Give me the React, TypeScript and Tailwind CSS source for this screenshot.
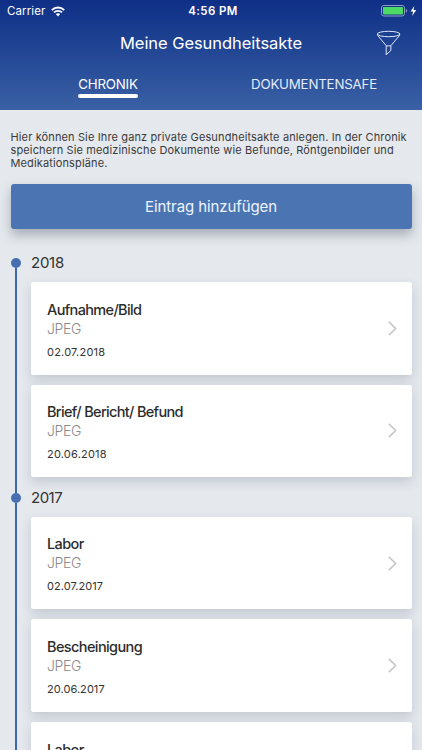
type Entry = { title: string; kind?: string; date?: string; dateClass?: string; titleClass: string };

const groups: { year: string; yearClass: string; entries: Entry[] }[] = [
  {
    year: "2018",
    yearClass: "tracking-[-0.25px]",
    entries: [
      { title: "Aufnahme/Bild", kind: "JPEG", date: "02.07.2018", titleClass: "tracking-[-0.65px]", dateClass: "tracking-[0.2px]" },
      { title: "Brief/ Bericht/ Befund", kind: "JPEG", date: "20.06.2018", titleClass: "tracking-[-0.67px]", dateClass: "tracking-[0.2px]" },
    ],
  },
  {
    year: "2017",
    yearClass: "tracking-[-0.5px]",
    entries: [
      { title: "Labor", kind: "JPEG", date: "02.07.2017", titleClass: "tracking-[-0.6px]", dateClass: "tracking-[0.05px]" },
      { title: "Bescheinigung", kind: "JPEG", date: "20.06.2017", titleClass: "tracking-[-0.6px]", dateClass: "tracking-[0.05px]" },
      { title: "Labor", titleClass: "tracking-[-0.6px]" },
    ],
  },
];

const StatusBar = () => {
  return (
    <div className="grid h-[22px] grid-cols-3 items-center pl-[7px] pr-[5px] text-[11.5px] leading-none">
      <div className="flex items-center gap-[5.5px]">
        <span className="pt-px tracking-[0.1px]">Carrier</span>
        <svg width="14" height="11" viewBox="0 0 14 11" fill="none" stroke="white" strokeWidth="1.9">
          <path d="M0.8 4.1C4.3 0.6 9.7 0.6 13.2 4.1" />
          <path d="M3 6.4C5.2 4.3 8.8 4.3 11 6.4" />
          <path d="M4.8 8.1C6 7 8 7 9.2 8.1L7 10.4Z" fill="white" stroke="none" />
        </svg>
      </div>
      <span className="pt-px pl-[2px] text-center font-semibold tracking-[0.4px]">4:56 PM</span>
      <div className="flex items-center justify-end">
        <svg width="36" height="12" viewBox="0 0 36 12">
          <rect x="0.5" y="0.5" width="23" height="10.5" rx="2.4" fill="none" stroke="#8a9cc8" />
          <rect x="2" y="2" width="20" height="7.5" rx="1" fill="#4cd964" />
          <path d="M24.8 4V7.6C25.7 7.3 26.2 6.6 26.2 5.8S25.7 4.3 24.8 4Z" fill="#8a9cc8" />
          <path d="M33.3 1L29.5 6.4H32.1L31.2 10.9L35.2 5.1H32.5Z" fill="white" />
        </svg>
      </div>
    </div>
  );
};

const FilterIcon = () => {
  return (
    <svg width="26" height="26" viewBox="0 0 26 26" fill="none" stroke="#dfe8fa" strokeWidth="1" strokeLinejoin="round">
      <ellipse cx="12.6" cy="4" rx="11.3" ry="2.7" />
      <path d="M1.3 4.2C1.5 5.3 2.2 6.1 3 7L10.2 15.7V24.8L14.9 20.4V15.7L22.2 7C23 6.1 23.7 5.3 23.9 4.2" />
      <path d="M10.2 15.9H14.9" />
    </svg>
  );
};

const Header = () => {
  return (
    <header className="h-[110px] bg-linear-to-b from-[#0f2f86] to-[#3a60a5] text-white">
      <StatusBar />
      <div className="grid h-[42px] grid-cols-[46px_1fr_46px] items-center">
        <h1 className="col-start-2 text-center text-[16.5px] tracking-[-0.06px]">Meine Gesundheitsakte</h1>
        <button className="justify-self-start">
          <FilterIcon />
        </button>
      </div>
      {/* Tabs */}
      <nav className="grid grid-cols-2 px-[5px] pt-[11px] text-[13.3px] leading-[19px] tracking-[-0.2px]">
        <div className="flex flex-col items-center">
          <span>CHRONIK</span>
          <div className="h-1 w-[60px] rounded-full bg-white" />
        </div>
        <div className="text-center text-[#e3ebfa]">DOKUMENTENSAFE</div>
      </nav>
    </header>
  );
};

const EntryCard = ({ entry }: { entry: Entry }) => {
  return (
    <div className="flex h-[92.5px] items-center justify-between rounded-[2.5px] bg-white pl-4 pr-[15px] shadow-[0_5px_12px_rgba(60,70,90,0.2)]">
      <div className="h-full pt-[17.5px]">
        <h3 className={`text-[14.5px] leading-[19px] font-medium text-[#2c2c2c] ${entry.titleClass}`}>{entry.title}</h3>
        {entry.kind && <p className="text-[14px] leading-[19px] font-light tracking-[-0.35px] text-[#8a8a8a]">{entry.kind}</p>}
        {entry.date && <p className={`mt-[6px] text-[11px] leading-4 text-[#333] ${entry.dateClass}`}>{entry.date}</p>}
      </div>
      <svg width="9" height="15" viewBox="0 0 9 15" fill="none" stroke="#c7c7cc" strokeWidth="1.6">
        <path d="M0.9 0.9L7.6 7.5L0.9 14.1" />
      </svg>
    </div>
  );
};

const App = () => {
  return (
    <div className="h-[750px] overflow-hidden bg-[#e5e9ee] font-['Inter','Liberation_Sans',sans-serif]">
      <Header />
      <main className="pl-[10.5px] pr-[10.5px] pt-[21px]">
        <p className="text-[11px] leading-[13.2px] tracking-[0.13px] whitespace-nowrap text-[#3a3a3a]">
          Hier können Sie Ihre ganz private Gesundheitsakte anlegen. In der Chronik
          <br />
          speichern Sie medizinische Dokumente wie Befunde, Röntgenbilder und
          <br />
          Medikationspläne.
        </p>
        <button className="mt-[13.4px] h-[45px] w-full rounded-[3px] bg-[#4b74b3] pt-[2px] text-[15px] tracking-[-0.1px] text-[#eef4ff] shadow-[0_6px_12px_rgba(50,60,80,0.35)]">
          Eintrag hinzufügen
        </button>

        {/* Timeline */}
        <div className="pt-[24px]">
          {groups.map((group) => (
            <section key={group.year} className="grid grid-cols-[10px_1fr] gap-x-[10.5px]">
              <div className="flex flex-col items-center">
                <div className="h-[5px] w-0.5" />
                <div className="size-[10px] shrink-0 rounded-full bg-[#4670b2]" />
                <div className="-mb-[5px] w-[2px] flex-1 bg-[#3f68aa]" />
              </div>
              <div>
                <h2 className={`h-5 text-[15px] leading-5 text-[#333] ${group.yearClass}`}>{group.year}</h2>
                <div className="flex flex-col gap-[10.2px] pt-[9px] pb-[10.6px]">
                  {group.entries.map((entry, i) => (
                    <EntryCard key={i} entry={entry} />
                  ))}
                </div>
              </div>
            </section>
          ))}
        </div>
      </main>
    </div>
  );
};

export default App;
